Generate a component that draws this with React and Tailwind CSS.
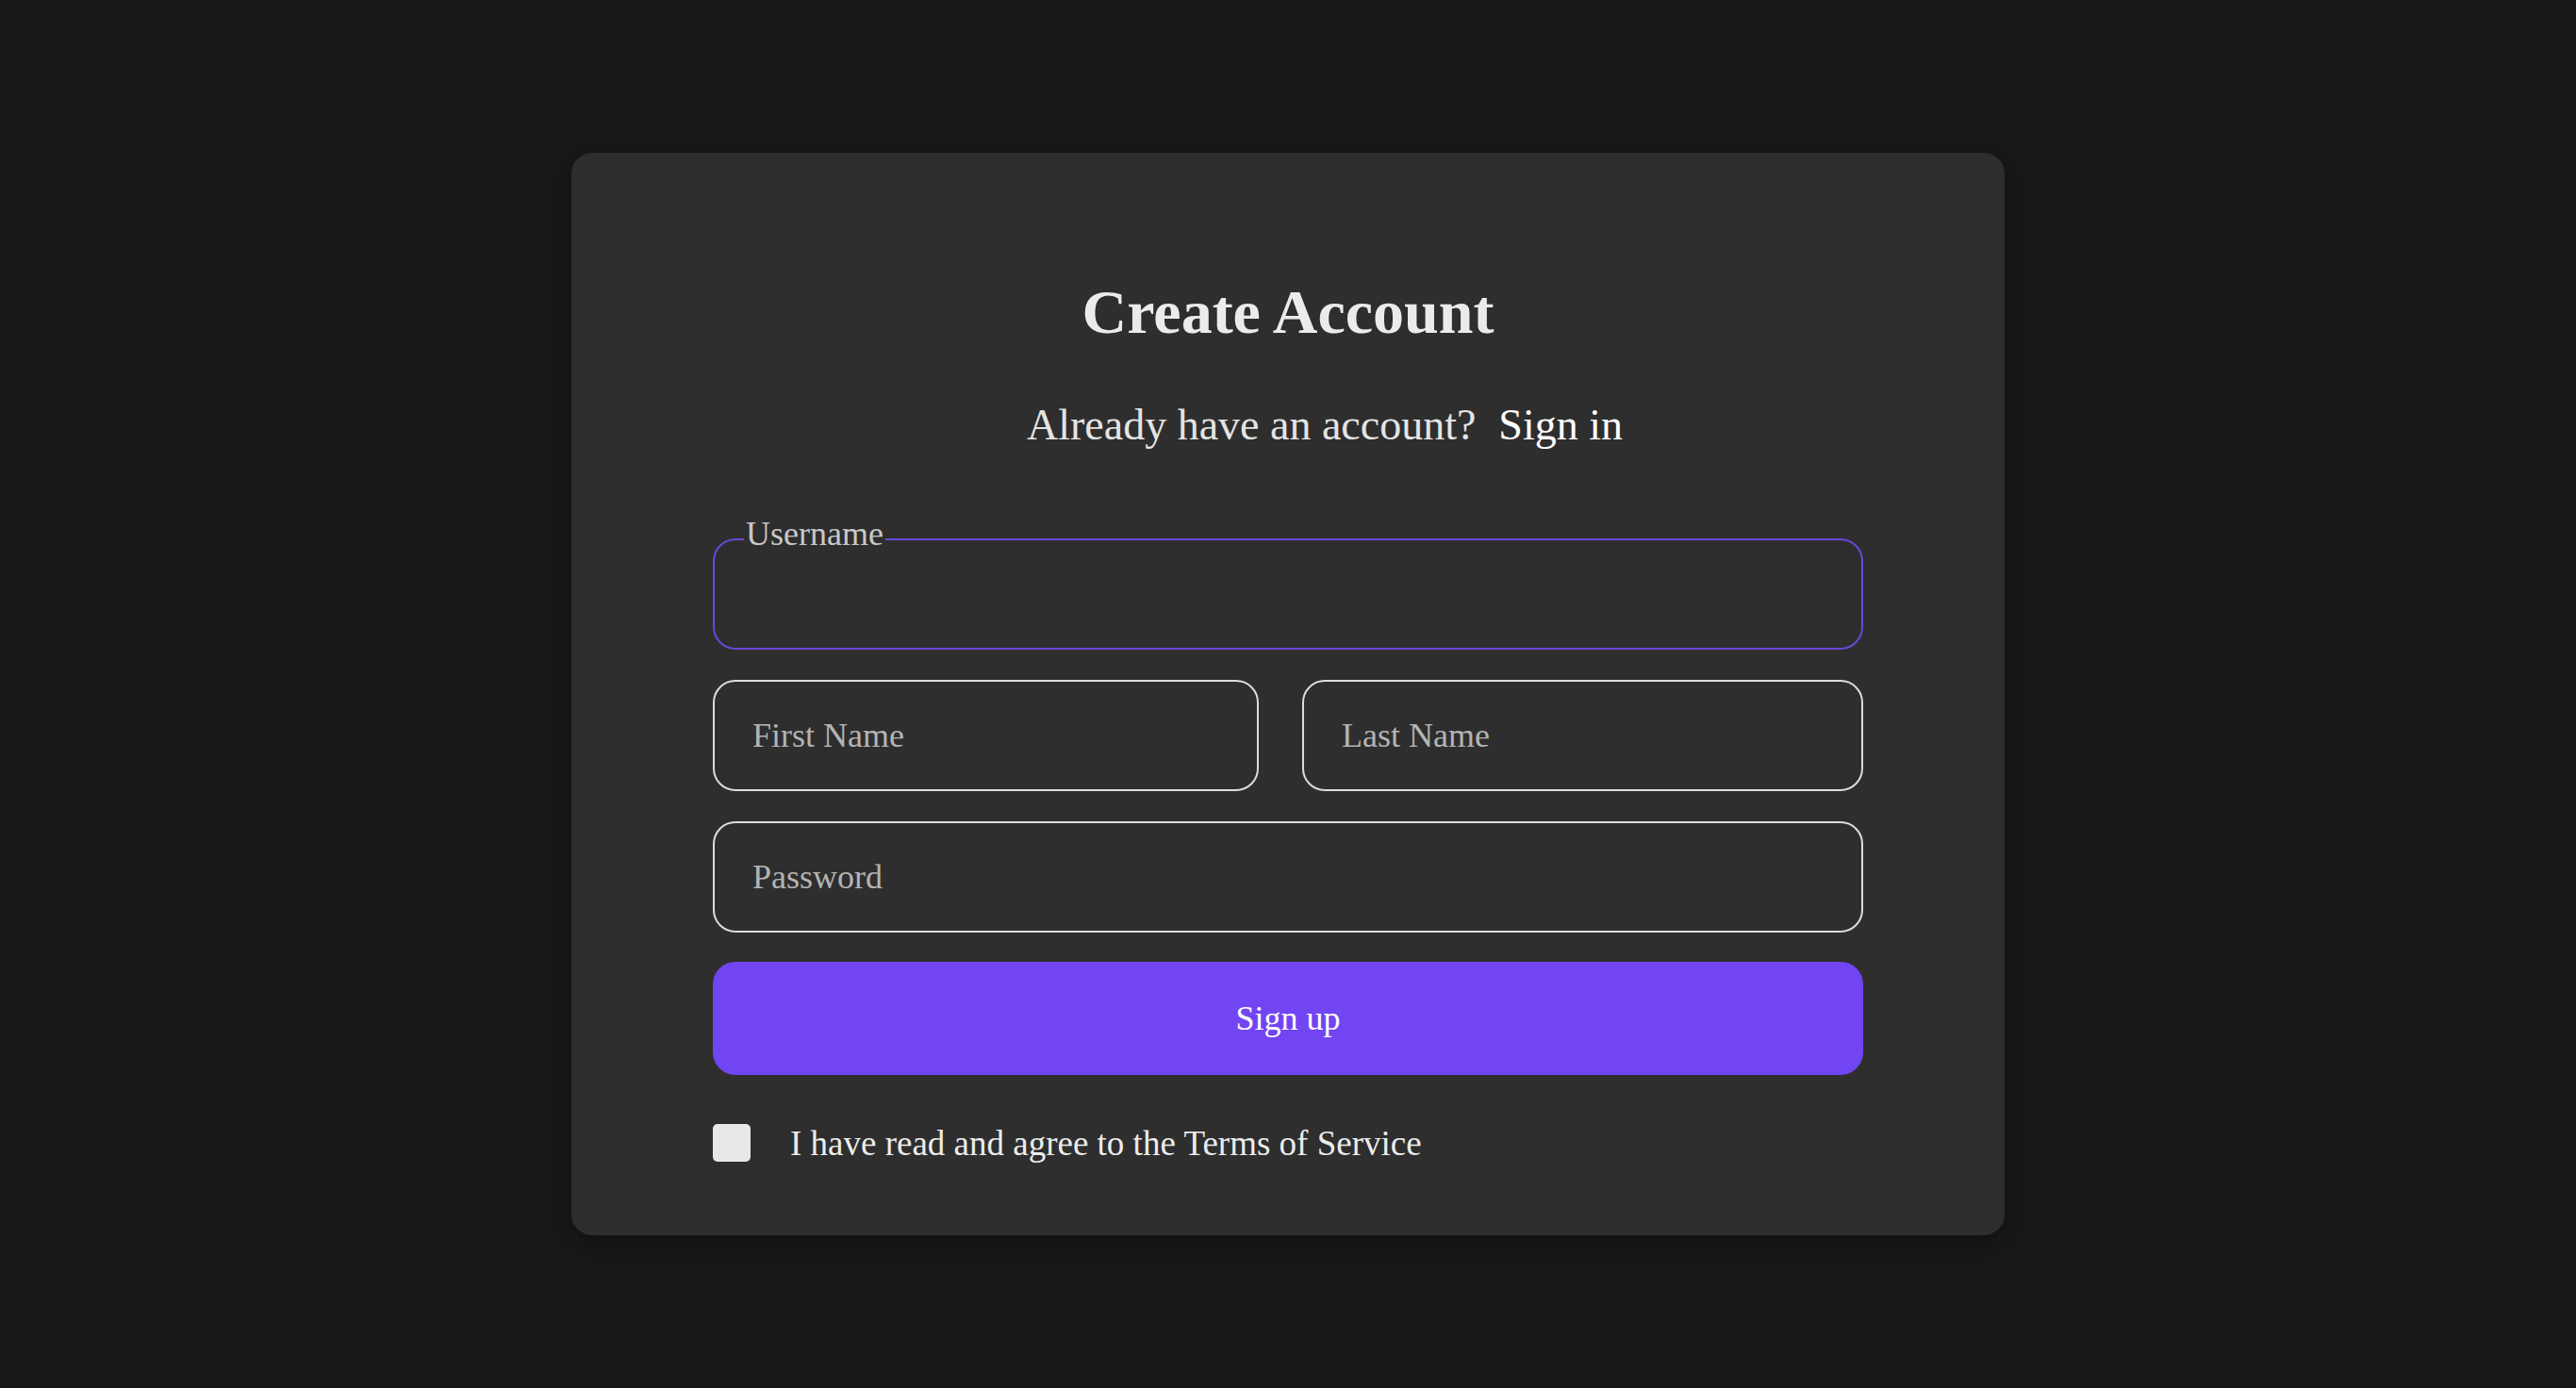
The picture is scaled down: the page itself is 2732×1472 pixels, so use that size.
import React, { useState } from 'react';

const serif = 'font-["Liberation_Serif",serif]';

const Field = ({ placeholder, type = 'text', className = '' }) => (
  <input
    type={type}
    placeholder={placeholder}
    className={`h-[118px] rounded-[24px] border-2 border-[#dcdcdc] bg-transparent px-[40px] text-[36px] text-[#e8e8e8] placeholder:text-[#b4b4b4] outline-none ${className}`}
  />
);

export default function App() {
  const [agree, setAgree] = useState(false);

  return (
    <div className={`min-h-screen w-full bg-[#181818] flex items-center justify-center ${serif}`}>
      <div className="w-[1520px] rounded-[22px] bg-[#2e2e2e] px-[150px] pt-[136px] pb-[78px] shadow-[0_8px_30px_rgba(0,0,0,0.35)]">
        {/* Heading */}
        <h1 className="text-center text-[66px] leading-none font-bold text-[#ebebeb]">
          Create Account
        </h1>
        <p className="mt-[64px] pl-[78px] text-center text-[46px] leading-none text-[#e4e4e4]">
          Already have an account?
          <a href="#" className="ml-[24px] text-white">Sign in</a>
        </p>

        {/* Form */}
        <form className="mt-[97px] flex flex-col" onSubmit={(e) => e.preventDefault()}>
          <div className="relative">
            <span className="absolute left-[33px] top-[-23px] bg-[#2e2e2e] px-[2px] text-[36px] leading-none text-[#c8c8c8]">
              Username
            </span>
            <input
              type="text"
              className="h-[118px] w-full rounded-[24px] border-2 border-[#6a48d8] bg-transparent px-[40px] text-[36px] text-[#e8e8e8] outline-none"
            />
          </div>

          <div className="mt-[32px] flex gap-[46px]">
            <Field placeholder="First Name" className="w-[579px]" />
            <Field placeholder="Last Name" className="flex-1 min-w-0" />
          </div>

          <Field placeholder="Password" type="password" className="mt-[32px] w-full" />

          <button
            type="submit"
            className="mt-[31px] h-[120px] w-full rounded-[24px] bg-[#7245f2] text-[36px] leading-none text-white"
          >
            Sign up
          </button>

          <label className="mt-[52px] flex items-center gap-[42px] cursor-pointer">
            <span
              onClick={() => setAgree((v) => !v)}
              className={`h-[40px] w-[40px] shrink-0 rounded-[5px] ${agree ? 'bg-[#7245f2]' : 'bg-[#e8e8e8]'}`}
            />
            <span className="text-[37px] leading-none text-[#ececec]">
              I have read and agree to the Terms of Service
            </span>
          </label>
        </form>
      </div>
    </div>
  );
}
